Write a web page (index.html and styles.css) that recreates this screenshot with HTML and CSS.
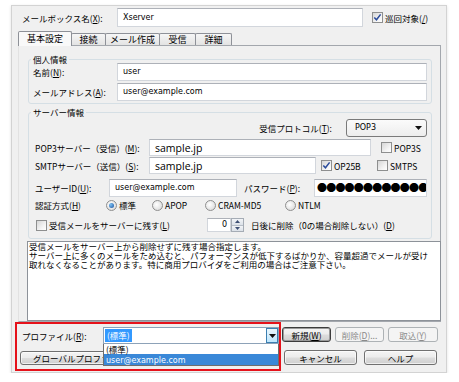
FILE: index.html
```html
<!DOCTYPE html>
<html lang="ja">
<head>
<meta charset="utf-8">
<title>メールボックスの設定</title>
<link rel="stylesheet" href="styles.css">
</head>
<body>
<div class="dialog">
  <div class="row-top">
    <span class="lbl-mailbox">メールボックス名(<u>X</u>):</span>
    <div class="input in-mailbox"><span class="latin">Xserver</span></div>
    <div class="chk top-check">
      <span class="cb"><svg width="9" height="9" viewBox="0 0 9 9"><path d="M1.3 4.4 L3.5 6.8 L7.6 1.4" fill="none" stroke="#2a4b9b" stroke-width="1.5"/></svg></span>
      <span class="cb-text">巡回対象(<u>/</u>)</span>
    </div>
  </div>

  <div class="tabs">
    <div class="tab active t1">基本設定</div>
    <div class="tab t2">接続</div>
    <div class="tab t3">メール作成</div>
    <div class="tab t4">受信</div>
    <div class="tab t5">詳細</div>
  </div>

  <div class="panel">
    <div class="group g1">
      <div class="gtitle">個人情報</div>
      <div class="row r-name">
        <span class="lbl-g1">名前(<u>N</u>):</span>
        <div class="input in-g1"><span class="latin">user</span></div>
      </div>
      <div class="row r-mail">
        <span class="lbl-g1">メールアドレス(<u>A</u>):</span>
        <div class="input in-g1"><span class="latin">user@example.com</span></div>
      </div>
    </div>

    <div class="group g2">
      <div class="gtitle">サーバー情報</div>
      <div class="row r-proto">
        <span class="lbl-proto">受信プロトコル(<u>T</u>):</span>
        <div class="select">
          <span class="latin">POP3</span>
          <svg class="sel-arrow" width="7" height="4" viewBox="0 0 7 4"><path d="M0 0H7L3.5 4Z" fill="#111"/></svg>
        </div>
      </div>
      <div class="row r-pop">
        <span class="lbl-srv">POP3サーバー（受信）(<u>M</u>):</span>
        <div class="input in-pop"><span class="host">sample.jp</span></div>
        <div class="chk chk-pop3s"><span class="cb"></span><span class="cb-text">POP3S</span></div>
      </div>
      <div class="row r-smtp">
        <span class="lbl-srv">SMTPサーバー（送信）(<u>S</u>):</span>
        <div class="input in-smtp"><span class="host">sample.jp</span></div>
        <div class="chk chk-op"><span class="cb"><svg width="9" height="9" viewBox="0 0 9 9"><path d="M1.3 4.4 L3.5 6.8 L7.6 1.4" fill="none" stroke="#2a4b9b" stroke-width="1.5"/></svg></span><span class="cb-text">OP25B</span></div>
        <div class="chk chk-smtps"><span class="cb"></span><span class="cb-text">SMTPS</span></div>
      </div>
      <div class="row r-user">
        <span class="lbl-user">ユーザーID(<u>U</u>):</span>
        <div class="input in-user"><span class="latin">user@example.com</span></div>
        <span class="lbl-pass">パスワード(<u>P</u>):</span>
        <div class="input in-pass"><span class="dots">●●●●●●●●●●●●</span></div>
      </div>
      <div class="row r-auth">
        <span class="lbl-auth">認証方式(<u>H</u>)</span>
        <div class="radio ri1"><span class="rb on"></span><span class="rb-text">標準</span></div>
        <div class="radio ri2"><span class="rb"></span><span class="rb-text">APOP</span></div>
        <div class="radio ri3"><span class="rb"></span><span class="rb-text">CRAM-MD5</span></div>
        <div class="radio ri4"><span class="rb"></span><span class="rb-text">NTLM</span></div>
      </div>
      <div class="row r-keep">
        <div class="chk chk-keep"><span class="cb"></span><span class="cb-text">受信メールをサーバーに残す(<u>L</u>)</span></div>
        <div class="input spin-in"><span class="latin">0</span></div>
        <div class="spin-btn">
          <span class="spin-half"><svg width="5" height="3" viewBox="0 0 5 3"><path d="M0 3H5L2.5 0Z" fill="#3d4f73"/></svg></span>
          <span class="spin-half"><svg width="5" height="3" viewBox="0 0 5 3"><path d="M0 0H5L2.5 3Z" fill="#3d4f73"/></svg></span>
        </div>
        <span class="lbl-days">日後に削除（0の場合削除しない）(<u>D</u>)</span>
      </div>
    </div>

    <div class="desc"><div class="dl">受信メールをサーバー上から削除せずに残す場合指定します。</div><div class="dl">サーバー上に多くのメールをため込むと、パフォーマンスが低下するばかりか、容量超過でメールが受け</div><div class="dl">取れなくなることがあります。特に商用プロバイダをご利用の場合はご注意下さい。</div></div>
  </div>

  <div class="bottom">
    <div class="redbox">
      <div class="prof-row">
        <span class="lbl-prof">プロファイル(<u>R</u>):</span>
        <div class="combo">
          <span class="combo-sel">(標準)</span>
          <span class="combo-btn"><svg width="7" height="4" viewBox="0 0 7 4"><path d="M0 0H7L3.5 4Z" fill="#111"/></svg></span>
        </div>
      </div>
      <div class="btn gbtn">グローバルプロファイル(<u>G</u>)...</div>
      <div class="dropdown">
        <div class="dd-item">(標準)</div>
        <div class="dd-item sel"><span class="latin">user@example.com</span></div>
      </div>
    </div>
    <div class="btns">
      <div class="btn-row1">
        <div class="btn default b-new">新規(<u>W</u>)</div>
        <div class="btn disabled b-del">削除(<u>D</u>)...</div>
        <div class="btn disabled b-imp">取込(<u>Y</u>)</div>
      </div>
      <div class="btn-row2">
        <div class="btn b-cancel">キャンセル</div>
        <div class="btn b-help">ヘルプ</div>
      </div>
    </div>
  </div>
</div>
</body>
</html>
```

FILE: styles.css
```css
* { box-sizing: border-box; }

body {
  margin: 0;
  background: #ffffff;
  font-family: "Noto Sans CJK JP", "Noto Sans CJK SC", sans-serif;
  font-size: 8.5px;
  font-weight: 400;
  line-height: 12px;
  color: #000;
}

u { text-decoration: underline; text-underline-offset: 1px; }

.latin { font-family: "DejaVu Sans", sans-serif; font-size: 8px; }
.host { font-family: "Open Sans", sans-serif; font-size: 10.5px; }

.dialog {
  margin: 5px 0 0 11px;
  width: 436px;
  height: 368px;
  border: 1px solid #d3d3d3;
  background: #f0f0f0;
  box-shadow: 0 1px 3px rgba(0, 0, 0, 0.12);
  display: flex;
  flex-direction: column;
}

/* generic */
.row { display: flex; align-items: center; flex: none; }
.input {
  display: flex;
  align-items: center;
  background: #fff;
  border: 1px solid #d2d6dc;
  border-top-color: #adb1b8;
  padding-left: 5px;
  white-space: nowrap;
  overflow: hidden;
  flex: none;
}
.chk { display: flex; align-items: center; flex: none; }
.cb {
  width: 11px;
  height: 11px;
  border: 1px solid #8e8f8f;
  background: linear-gradient(135deg, #d6d6d6, #f4f4f4 65%, #ffffff);
  display: flex;
  align-items: center;
  justify-content: center;
  flex: none;
}
.cb-text { margin-left: 2px; white-space: nowrap; }

/* top row */
.row-top { display: flex; align-items: center; height: 19px; margin-top: 2px; padding-left: 10px; }
.lbl-mailbox { width: 95px; flex: none; }
.in-mailbox { width: 246px; height: 19px; }
.top-check { margin-left: 9px; }

/* tabs */
.tabs {
  display: flex;
  align-items: flex-end;
  height: 14px;
  margin: 4px 0 0 6px;
  position: relative;
  z-index: 1;
  flex: none;
}
.tab {
  height: 12px;
  border: 1px solid #8e9198;
  border-bottom: none;
  border-radius: 2px 2px 0 0;
  margin-left: -1px;
  background: linear-gradient(#f6f6f6, #e3e3e3);
  display: flex;
  align-items: center;
  justify-content: center;
  font-size: 9px;
  white-space: nowrap;
}
.tab.active { height: 15px; margin-left: 0; margin-bottom: -1px; background: #f9f9f9; }
.t1 { width: 54px; }
.t2 { width: 35px; }
.t3 { width: 55px; }
.t4 { width: 37px; }
.t5 { width: 37px; }

/* panel */
.panel {
  margin-left: 6px;
  width: 423px;
  height: 277px;
  flex: none;
  border: 1px solid #a3a7ad;
  border-left-color: #e2e2e2;
  padding: 0 8px 0 9px;
}

.group { border: 1px solid #d5dfe5; border-radius: 3px; }
.gtitle {
  width: max-content;
  padding: 0 2px;
  background: #f0f0f0;
  line-height: 12px;
}
.g1 { margin-top: 13px; padding: 0 4px 2px 4px; }
.g1 .gtitle { margin: -7px 0 -2px -2px; }
.g2 { margin-top: 8px; padding: 0 4px 6px 6px; }
.g2 .gtitle { margin: -7px 0 1px -4px; }

.r-name { height: 18px; }
.r-mail { height: 18px; margin-top: 2px; }
.lbl-g1 { width: 84px; flex: none; }
.in-g1 { width: 310px; height: 18px; }

.r-proto { height: 18px; justify-content: flex-end; }
.lbl-proto { margin-right: 14px; }
.select {
  width: 81px;
  height: 18px;
  border: 1px solid #7a7a7a;
  border-radius: 3px;
  background: linear-gradient(#fbfbfb, #ededed);
  display: flex;
  align-items: center;
  padding-left: 8px;
}
.sel-arrow { margin-left: auto; margin-right: 4px; }

.r-pop { height: 17px; margin-top: 2px; }
.r-smtp { height: 17px; margin-top: 1px; }
.lbl-srv { width: 114px; flex: none; white-space: nowrap; }
.in-pop { width: 222px; height: 17px; }
.in-smtp { width: 167px; height: 17px; }
.chk-pop3s { margin-left: 10px; }
.chk-op { margin-left: 5px; width: 56px; }

.r-user { height: 18px; margin-top: 5px; }
.lbl-user { width: 74px; flex: none; }
.in-user { width: 128px; height: 18px; }
.lbl-pass { margin-left: 7px; width: 70px; flex: none; }
.in-pass { width: 113px; height: 18px; padding-left: 2px; }
.dots { font-size: 10px; letter-spacing: -0.8px; }

.r-auth { height: 14px; margin-top: 1px; }
.lbl-auth { width: 71px; flex: none; }
.radio { display: flex; align-items: center; flex: none; }
.ri1 { width: 46px; }
.ri2 { width: 53px; }
.ri3 { width: 80px; }
.rb {
  width: 11px;
  height: 11px;
  border-radius: 50%;
  border: 1px solid #8f8f8f;
  background: radial-gradient(circle at 40% 40%, #ffffff, #d4d4d4);
  display: flex;
  align-items: center;
  justify-content: center;
  flex: none;
}
.rb.on::after {
  content: "";
  width: 5px;
  height: 5px;
  border-radius: 50%;
  background: radial-gradient(circle at 35% 35%, #7cc2f5, #1b4f9c);
}
.rb-text { margin-left: 2px; }

.r-keep { height: 14px; margin-top: 6px; }
.chk-keep { width: 172px; padding-left: 1px; }
.spin-in { width: 24px; height: 14px; justify-content: flex-end; padding: 0 3px 0 0; }
.spin-btn {
  width: 13px;
  height: 14px;
  display: flex;
  flex-direction: column;
  border: 1px solid #a5acb5;
  flex: none;
}
.spin-half {
  flex: 1;
  display: flex;
  align-items: center;
  justify-content: center;
  background: linear-gradient(#f2f4f7, #dbe1e8);
}
.spin-half + .spin-half { border-top: 1px solid #b7bec7; }
.lbl-days { margin-left: 7px; white-space: nowrap; }

.desc {
  margin: 2px 0 0 -1px;
  width: 414px;
  height: 80px;
  background: #fff;
  border: 1px solid #8d9299;
  padding: 0 0 0 1px;
  font-size: 8.5px;
  white-space: nowrap;
  overflow: hidden;
}
.dl { height: 9px; line-height: 9px; }

/* bottom */
.bottom { display: flex; margin-left: 3px; flex: none; }
.redbox {
  width: 266px;
  height: 49px;
  border: 2px solid #e5121b;
  position: relative;
  flex: none;
}
.prof-row { display: flex; align-items: center; height: 17px; margin-top: 3px; padding-left: 5px; }
.lbl-prof { width: 81px; flex: none; }
.combo {
  width: 176px;
  height: 17px;
  border: 1px solid #8da2b8;
  background: #fff;
  display: flex;
  align-items: center;
  padding-left: 1px;
}
.combo-sel { background: #3399ff; color: #fff; padding: 0 2px; line-height: 13px; }
.combo-btn {
  margin-left: auto;
  width: 12px;
  height: 15px;
  border: 1px solid #3c7fb1;
  background: linear-gradient(#eaf6fd, #bee6fd);
  display: flex;
  align-items: center;
  justify-content: center;
}

.btn {
  display: flex;
  align-items: center;
  justify-content: center;
  border: 1px solid #707070;
  border-radius: 3px;
  background: linear-gradient(#f4f4f4 0%, #ececec 48%, #dddddd 52%, #cfcfcf 100%);
  box-shadow: inset 0 0 0 1px rgba(255, 255, 255, 0.65);
  white-space: nowrap;
  flex: none;
}
.btn.default { border-color: #3c3c3c; box-shadow: inset 0 0 0 1px #9a9a9a; }
.btn.disabled { border-color: #adb2b5; background: #f4f4f4; color: #8a8a8a; box-shadow: none; }

.gbtn {
  margin: 7px 0 0 3px;
  width: 220px;
  height: 14px;
  justify-content: flex-start;
  padding-left: 12px;
}

.dropdown {
  position: absolute;
  left: 86px;
  top: 20px;
  width: 176px;
  border: 1px solid #6e6e6e;
  border-top: none;
  background: #fff;
}
.dd-item { height: 10px; line-height: 10px; padding-left: 2px; }
.dd-item.sel { height: 11px; line-height: 11px; background: #3a88d8; color: #fff; }

.btns { margin: 5px 0 0 1px; display: flex; flex-direction: column; }
.btn-row1 { display: flex; gap: 4px; }
.btn-row1 .btn { height: 15px; }
.b-new { width: 49px; }
.b-del { width: 49px; }
.b-imp { width: 50px; }
.btn-row2 { display: flex; gap: 7px; margin: 8px 0 0 2px; }
.btn-row2 .btn { height: 15px; width: 73px; }
```
